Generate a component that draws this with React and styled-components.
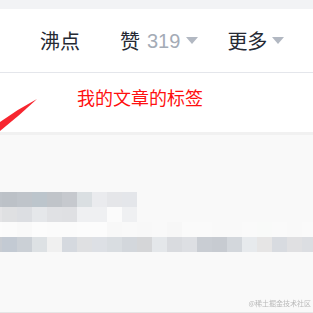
import React from 'react';
import styled, { createGlobalStyle } from 'styled-components';

const GlobalStyle = createGlobalStyle`
  html, body {
    margin: 0;
    padding: 0;
    width: 313px;
    height: 313px;
    overflow: hidden;
    background: #f9f9f9;
    font-family: "Noto Sans CJK SC", "Noto Sans", sans-serif;
  }
`;

const Page = styled.div`
  width: 313px;
  height: 313px;
  display: flex;
  flex-direction: column;
  background: #f9f9f9;
  overflow: hidden;
`;

const TopStrip = styled.div`
  height: 9px;
  background: #f2f3f5;
`;

const Header = styled.div`
  height: 63px;
  display: flex;
  align-items: center;
  padding-left: 40px;
  background: #fff;
  border-bottom: 1px solid #e4e6eb;
`;

const NavItem = styled.div`
  display: flex;
  align-items: center;
  margin-left: ${({ $gap }) => $gap || 0}px;
  font-size: 20px;
  line-height: 20px;
  color: #252933;
`;

const Count = styled.span`
  margin-left: 7px;
  font-family: "Liberation Sans", "Noto Sans", sans-serif;
  font-size: 20px;
  color: #a4abb6;
`;

const Caret = styled.span`
  width: 0;
  height: 0;
  margin-left: ${({ $gap }) => $gap}px;
  border-left: 6px solid transparent;
  border-right: 6px solid transparent;
  border-top: 7px solid #b2b8c2;
`;

const NoteArea = styled.div`
  position: relative;
  height: 62px;
  padding: 14px 0 0 77px;
  box-sizing: border-box;
  background: #fff;
  border-bottom: 3px solid #f1f1f1;
`;

const NoteText = styled.div`
  font-size: 18px;
  line-height: 20px;
  color: #ff1010;
`;

const Arrow = styled.svg`
  position: absolute;
  left: 0;
  top: 20px;
`;

const Content = styled.div`
  flex: 1;
  display: flex;
  flex-direction: column;
  padding-top: 57px;
  position: relative;
  border-bottom: 1px solid #e6e6e6;
`;

const MosaicRow = styled.div`
  display: flex;
  height: 15px;
`;

const Block = styled.div`
  flex: none;
  width: ${({ $w }) => $w}px;
  height: 15px;
`;

const Watermark = styled.div`
  position: absolute;
  right: 2px;
  bottom: 5px;
  font-size: 7px;
  line-height: 8px;
  color: #b9b9b9;
  filter: blur(0.3px);
`;

const rows = [
  ['#bec3c9', '#bcc1c7', '#bfc4ca', '#bcc5cc', '#c0c4c9', '#c6c9ce', '#dadfe2', '#eaebee', '#e5e6e9', '#e4e6ea'],
  ['#e4e4e6', '#dfe0e2', '#dcdee2', '#e5e7ea', '#e0e1e4', '#dfe0e3', '#eff0f2', '#eff0f2', '#fbfbfb', '#eff0f2'],
  ['#fcfcfc', '#fbfbfb', '#f9f9f9', '#fcfcfc', '#fbfbfb', '#fbfbfb', '#fcfcfc', '#fcfcfc', '#f8f8f8', '#f9f9f9', '#f8f8f8', '#f9f9f9', '#f7f7f7', '#fafafa', '#fafafa', '#f9f9f9', '#f9f9f9', '#fafafa', '#f9faf9', '#fafafa', '#f9f9f9', '#fafafa'],
  ['#c8ccd2', '#c3cad3', '#cbd0d6', '#dde1e4', '#f0f0f0', '#d5d9df', '#dfe0e2', '#dde0e5', '#d9dde1', '#d3d7dc', '#d5d6d8', '#e4e7ea', '#d9dbdf', '#dddfe3', '#c9cdd3', '#c7cbd1', '#d3d7dc', '#e7eaed', '#e6e5e5', '#d8dbe0', '#e0e0e2', '#dcdee2'],
];

const App = () => (
  <Page>
    <GlobalStyle />
    <TopStrip />
    <Header>
      <NavItem>沸点</NavItem>
      <NavItem $gap={40}>
        赞<Count>319</Count>
        <Caret $gap={6} />
      </NavItem>
      <NavItem $gap={29}>
        更多
        <Caret $gap={5} />
      </NavItem>
    </Header>
    <NoteArea>
      <Arrow width="40" height="42" viewBox="0 0 40 42">
        <path d="M0 29 Q18 16 37 6 Q20 22 0 38 Z" fill="#f7262f" />
      </Arrow>
      <NoteText>我的文章的标签</NoteText>
    </NoteArea>
    <Content>
      {rows.map((row, i) => (
        <MosaicRow key={i}>
          {row.map((c, j) => (
            <Block key={j} $w={j === 0 ? 2 : 15} style={{ background: c }} />
          ))}
        </MosaicRow>
      ))}
      <Watermark>@稀土掘金技术社区</Watermark>
    </Content>
  </Page>
);

export default App;
